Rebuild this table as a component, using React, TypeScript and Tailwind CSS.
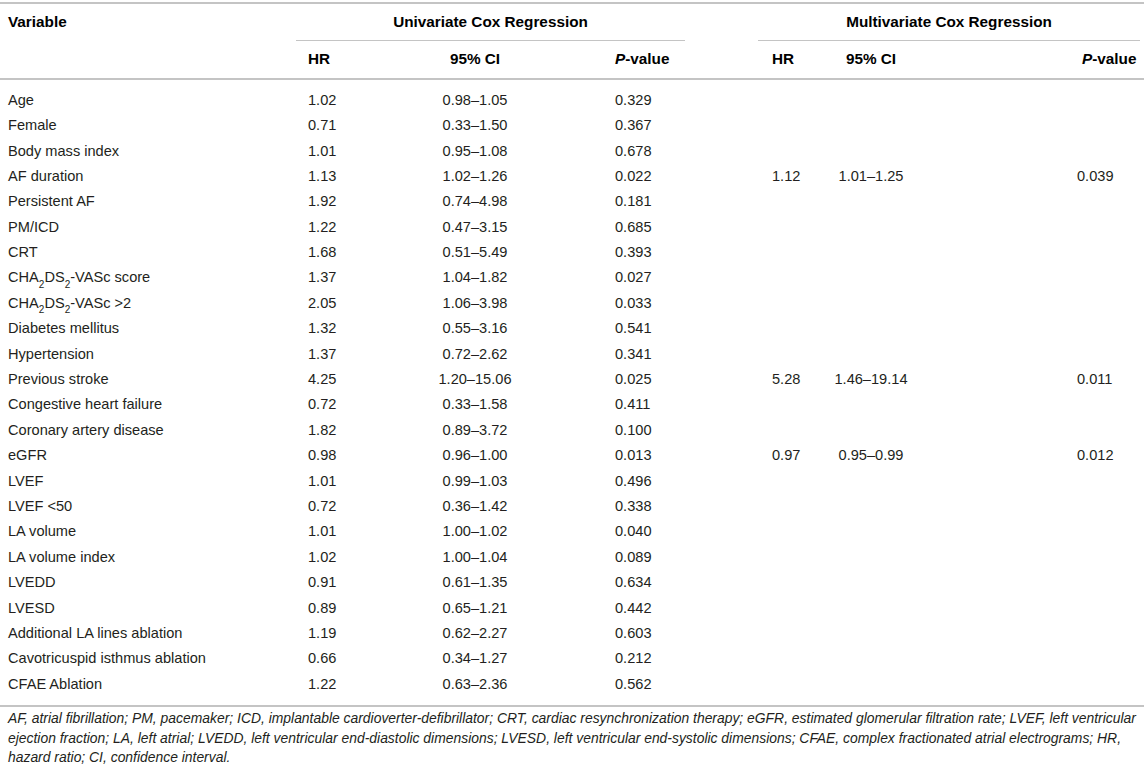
import React from 'react';

type Row = {
    name: React.ReactNode;
    hr: string;
    ci: string;
    p: string;
    mhr?: string;
    mci?: string;
    mp?: string;
};

const cha = (
    <>
        CHA<sub className="text-[10px] align-[-3px]">2</sub>DS<sub className="text-[10px] align-[-3px]">2</sub>-VASc
    </>
);

const rows: Row[] = [
    {name: 'Age', hr: '1.02', ci: '0.98–1.05', p: '0.329'},
    {name: 'Female', hr: '0.71', ci: '0.33–1.50', p: '0.367'},
    {name: 'Body mass index', hr: '1.01', ci: '0.95–1.08', p: '0.678'},
    {name: 'AF duration', hr: '1.13', ci: '1.02–1.26', p: '0.022', mhr: '1.12', mci: '1.01–1.25', mp: '0.039'},
    {name: 'Persistent AF', hr: '1.92', ci: '0.74–4.98', p: '0.181'},
    {name: 'PM/ICD', hr: '1.22', ci: '0.47–3.15', p: '0.685'},
    {name: 'CRT', hr: '1.68', ci: '0.51–5.49', p: '0.393'},
    {name: <>{cha} score</>, hr: '1.37', ci: '1.04–1.82', p: '0.027'},
    {name: <>{cha} &gt;2</>, hr: '2.05', ci: '1.06–3.98', p: '0.033'},
    {name: 'Diabetes mellitus', hr: '1.32', ci: '0.55–3.16', p: '0.541'},
    {name: 'Hypertension', hr: '1.37', ci: '0.72–2.62', p: '0.341'},
    {name: 'Previous stroke', hr: '4.25', ci: '1.20–15.06', p: '0.025', mhr: '5.28', mci: '1.46–19.14', mp: '0.011'},
    {name: 'Congestive heart failure', hr: '0.72', ci: '0.33–1.58', p: '0.411'},
    {name: 'Coronary artery disease', hr: '1.82', ci: '0.89–3.72', p: '0.100'},
    {name: 'eGFR', hr: '0.98', ci: '0.96–1.00', p: '0.013', mhr: '0.97', mci: '0.95–0.99', mp: '0.012'},
    {name: 'LVEF', hr: '1.01', ci: '0.99–1.03', p: '0.496'},
    {name: 'LVEF <50', hr: '0.72', ci: '0.36–1.42', p: '0.338'},
    {name: 'LA volume', hr: '1.01', ci: '1.00–1.02', p: '0.040'},
    {name: 'LA volume index', hr: '1.02', ci: '1.00–1.04', p: '0.089'},
    {name: 'LVEDD', hr: '0.91', ci: '0.61–1.35', p: '0.634'},
    {name: 'LVESD', hr: '0.89', ci: '0.65–1.21', p: '0.442'},
    {name: 'Additional LA lines ablation', hr: '1.19', ci: '0.62–2.27', p: '0.603'},
    {name: 'Cavotricuspid isthmus ablation', hr: '0.66', ci: '0.34–1.27', p: '0.212'},
    {name: 'CFAE Ablation', hr: '1.22', ci: '0.63–2.36', p: '0.562'},
];

const cols = 'grid grid-cols-[296px_104px_150px_135px_73px_54px_118px_214px]';

export default function App() {
    return (
        <div className="w-[1144px] h-[770px] bg-white text-[14.6px] text-[#231f20] font-['Liberation_Sans',Arial,sans-serif]">
            <div className="pt-[2px]">
                <div className="border-t-2 border-[#c4c4c4]"/>
                {/* header */}
                <div className={`${cols} font-bold text-[15.3px] text-black`}>
                    <div className="pl-2 h-[37px] flex items-center">Variable</div>
                    <div className="col-span-3 h-[37px] flex items-center justify-center border-b border-[#c4c4c4]">
                        Univariate Cox Regression
                    </div>
                    <div/>
                    <div className="col-span-3 mr-1 h-[37px] flex items-center justify-center border-b border-[#c4c4c4]">
                        Multivariate Cox Regression
                    </div>

                    <div className="h-[37px]"/>
                    <div className="pl-[12px] h-[37px] flex items-center">HR</div>
                    <div className="h-[37px] flex items-center justify-center">95% CI</div>
                    <div className="pl-[65px] h-[37px] flex items-center"><i>P</i>-value</div>
                    <div/>
                    <div className="pl-[14px] h-[37px] flex items-center">HR</div>
                    <div className="h-[37px] flex items-center justify-center">95% CI</div>
                    <div className="pl-[152px] h-[37px] flex items-center"><i>P</i>-value</div>
                </div>
                <div className="border-t-2 border-[#c4c4c4]"/>

                {/* body */}
                <div className="pt-[8px] pb-[8px]">
                    {rows.map((r, i) => (
                        <div key={i} className={`${cols} h-[25.4px] items-center whitespace-nowrap`}>
                            <div className="pl-2">{r.name}</div>
                            <div className="pl-[12px]">{r.hr}</div>
                            <div className="text-center">{r.ci}</div>
                            <div className="pl-[65px]">{r.p}</div>
                            <div/>
                            <div className="pl-[14px]">{r.mhr}</div>
                            <div className="text-center">{r.mci}</div>
                            <div className="pl-[147px]">{r.mp}</div>
                        </div>
                    ))}
                </div>
                <div className="border-t-2 border-[#c4c4c4]"/>

                {/* footnote */}
                <p className="px-2 pt-[2px] italic text-[13.9px] leading-[19.5px] text-[#231f20] whitespace-nowrap">
                    AF, atrial fibrillation; PM, pacemaker; ICD, implantable cardioverter-defibrillator; CRT, cardiac resynchronization therapy; eGFR, estimated glomerular filtration rate; LVEF, left ventricular
                    <br/>
                    ejection fraction; LA, left atrial; LVEDD, left ventricular end-diastolic dimensions; LVESD, left ventricular end-systolic dimensions; CFAE, complex fractionated atrial electrograms; HR,
                    <br/>
                    hazard ratio; CI, confidence interval.
                </p>
            </div>
        </div>
    );
}
